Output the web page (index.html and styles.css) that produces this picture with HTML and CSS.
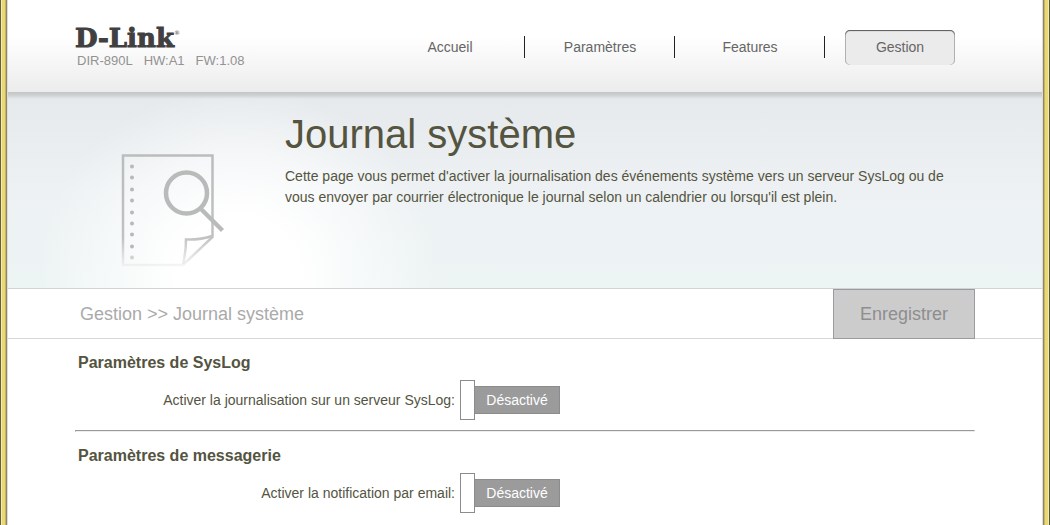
FILE: index.html
```html
<!DOCTYPE html>
<html lang="fr">
<head>
    <meta charset="UTF-8">
    <meta name="viewport" content="width=device-width, initial-scale=1.0">
    <title>Journal système</title>
    <link rel="stylesheet" href="styles.css">
</head>
<body>

    <div class="page">
        <!-- Header -->
        <header class="header">
            <div class="container header-inner">
                <div class="brand">
                    <div class="logo">D-Link<sup>®</sup></div>
                    <div class="device">
                        <span>DIR-890L</span>
                        <span>HW:A1</span>
                        <span>FW:1.08</span>
                    </div>
                </div>
                <nav class="menu">
                    <a href="#">Accueil</a>
                    <a href="#">Paramètres</a>
                    <a href="#">Features</a>
                    <a href="#" class="active">Gestion</a>
                </nav>
            </div>
        </header>

        <!-- Page title -->
        <section class="hero">
            <div class="container hero-inner">
                <svg class="hero-icon" width="120" height="130" viewBox="0 0 120 130" fill="none">
                    <defs>
                        <linearGradient id="fade" gradientUnits="userSpaceOnUse" x1="0" y1="20" x2="0" y2="122">
                            <stop offset="0" stop-color="#bbbdbd"/>
                            <stop offset="0.72" stop-color="#c0c2c2"/>
                            <stop offset="1" stop-color="#c0c2c2" stop-opacity="0.15"/>
                        </linearGradient>
                    </defs>
                    <g stroke="url(#fade)" stroke-width="2.500">
                        <path d="M13 121V11.500H102.500V93L73 121Z"/>
                        <path d="M73 120Q76 108 76 95.500Q91 96 102 92"/>
                    </g>
                    <g fill="#b6b8b9">
                        <circle cx="22" cy="22.500" r="2"/>
                        <circle cx="22" cy="33.500" r="2"/>
                        <circle cx="22" cy="45.500" r="2"/>
                        <circle cx="22" cy="56.500" r="2"/>
                        <circle cx="22" cy="68.500" r="2"/>
                        <circle cx="22" cy="79.500" r="2"/>
                        <circle cx="22" cy="90.500" r="2"/>
                        <circle cx="22" cy="102.500" r="2"/>
                        <circle cx="22" cy="113.500" r="2" opacity="0.6"/>
                    </g>
                    <g stroke="#b9bbbb">
                        <circle cx="76.500" cy="49" r="20.500" stroke-width="4.500"/>
                        <path d="M91 65L112.500 86.500" stroke-width="4.500"/>
                    </g>
                </svg>
                <div class="hero-text">
                    <h1>Journal système</h1>
                    <p>Cette page vous permet d'activer la journalisation des événements système vers un serveur SysLog ou de vous envoyer par courrier électronique le journal selon un calendrier ou lorsqu'il est plein.</p>
                </div>
            </div>
        </section>

        <!-- Breadcrumb and save button -->
        <div class="toolbar">
            <div class="container toolbar-inner">
                <div class="breadcrumb">Gestion &gt;&gt; Journal système</div>
                <button type="button" class="save" disabled>Enregistrer</button>
            </div>
        </div>

        <!-- Settings -->
        <main class="container">
            <section class="settings">
                <h2>Paramètres de SysLog</h2>
                <div class="row">
                    <label for="syslog">Activer la journalisation sur un serveur SysLog:</label>
                    <div class="switch">
                        <input type="checkbox" id="syslog">
                        <span>Désactivé</span>
                    </div>
                </div>
            </section>
            <hr>
            <section class="settings">
                <h2>Paramètres de messagerie</h2>
                <div class="row">
                    <label for="email">Activer la notification par email:</label>
                    <div class="switch">
                        <input type="checkbox" id="email">
                        <span>Désactivé</span>
                    </div>
                </div>
            </section>
        </main>
    </div>

</body>
</html>
```

FILE: styles.css
```css
* { margin: 0; padding: 0; box-sizing: border-box; }
body {
    font-family: Arial, "Liberation Sans", sans-serif;
    font-size: 14px;
    color: #54543f;
    padding: 0 8px;
    /* yellow frame on both sides */
    background:
        linear-gradient(90deg, #6b5c3a 1px, #f5ecb0 1px, #f5ecb0 2px, #e8d978 2px, #e8d978 5px, #c4b45f 5px, #c4b45f 6px, #8f8763 6px, #8f8763 7px, #dcdcdc 7px) left / 8px 100% no-repeat,
        linear-gradient(270deg, #55523a 1px, #f5ecb0 1px, #f5ecb0 2px, #e8d978 2px, #e8d978 5px, #c4b45f 5px, #c4b45f 6px, #8f8763 6px, #8f8763 7px, #dcdcdc 7px) right / 8px 100% no-repeat;
}
.page {
    min-height: 100vh;
    background: #fff;
}
.container {
    max-width: 900px;
    margin: 0 auto;
}

/* Header */
.header {
    background: linear-gradient(#fff 40%, #ececec);
}
.header-inner {
    display: flex;
    justify-content: space-between;
    height: 92px;
}
.brand {
    padding-top: 24px;
}
.logo {
    font-family: "DejaVu Serif", serif;
    font-size: 26px;
    font-weight: bold;
    line-height: 29px;
    color: #404040;
    -webkit-text-stroke: 1px #404040;
}
.logo sup {
    font-size: 6px;
    font-weight: normal;
    line-height: 1px;
    vertical-align: 12px;
    -webkit-text-stroke: 0;
}
.device {
    display: flex;
    gap: 11px;
    padding-left: 2px;
    font-size: 13px;
    line-height: 16px;
    color: #929292;
}
.menu {
    display: flex;
    padding-top: 30px;
}
.menu a {
    position: relative;
    width: 110px;
    height: 35px;
    margin: 0 20px;
    line-height: 34px;
    text-align: center;
    text-decoration: none;
    color: #666;
}
.menu a:not(:last-child)::after {
    content: "";
    position: absolute;
    top: 6px;
    right: -20px;
    width: 1px;
    height: 22px;
    background: #222;
}
.menu .active {
    border-radius: 5px;
    background: #ebebeb;
    box-shadow: inset 0 1px 1px #555, inset 1px 0 #bbb, inset -1px 0 #bbb;
}

/* Page title */
.hero {
    border-bottom: 1px solid #d0d4d5;
    background:
        linear-gradient(#c2c6c7, #ccd0d1 3px, rgba(220, 224, 226, 0) 7px),
        radial-gradient(ellipse 200px 185px at 230px 180px, #fff 30%, rgba(255, 255, 255, 0)),
        linear-gradient(#e5e9eb, #edf1f3 50%, #edf4f4);
}
.hero-inner {
    display: flex;
    align-items: flex-start;
    height: 196px;
    padding: 17px 0 0 35px;
}
.hero-icon {
    flex: none;
    margin: 35px 55px 0 0;
}
h1 {
    font-size: 40px;
    font-weight: normal;
    line-height: 50px;
}
.hero-text p {
    max-width: 680px;
    padding-top: 7px;
    line-height: 21px;
}

/* Breadcrumb and save button */
.toolbar {
    border-bottom: 1px solid #d8d8d8;
}
.toolbar-inner {
    display: flex;
    justify-content: space-between;
    height: 49px;
}
.breadcrumb {
    padding-left: 5px;
    font-size: 18px;
    line-height: 50px;
    color: #aaa;
}
.save {
    width: 142px;
    height: 50px;
    border: 1px solid #999b9f;
    background: #ccc;
    font-family: inherit;
    font-size: 18px;
    color: #8e8e8e;
}

/* Settings */
.settings {
    padding: 12px 0 10px;
}
h2 {
    padding-left: 3px;
    font-size: 16px;
    line-height: 23px;
}
.row {
    display: flex;
    align-items: center;
    gap: 5px;
    padding-top: 6px;
}
.row label {
    width: 380px;
    text-align: right;
}
.switch {
    display: flex;
    align-items: center;
}
.switch input {
    appearance: none;
    width: 15px;
    height: 40px;
    border: 1px solid #8c8c8c;
    background: #fff;
}
.switch span {
    width: 85px;
    border: 1px solid #8c8c8c;
    border-left: 0;
    background: #9b9b9b;
    line-height: 26px;
    text-align: center;
    color: #fff;
}
hr {
    border: 1px solid;
    border-color: #999 #eee #eee #999;
}
```
